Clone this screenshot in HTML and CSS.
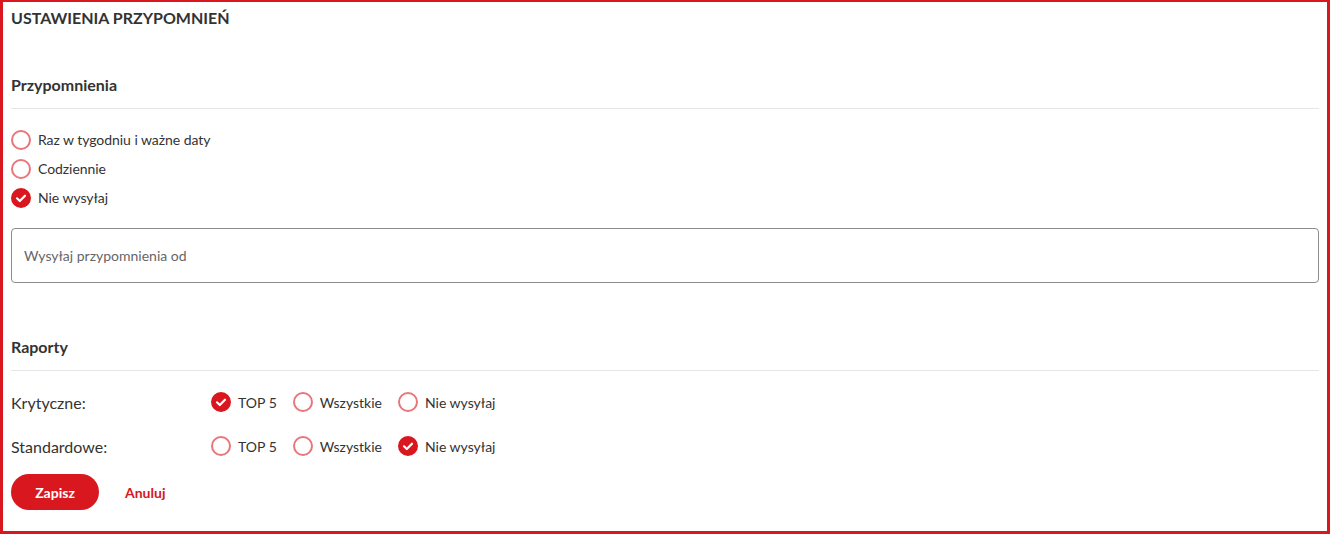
FILE: index.html
```html
<!DOCTYPE html>
<html lang="pl">
<head>
<meta charset="utf-8">
<link rel="stylesheet" href="styles.css">
</head>
<body>
<div class="panel">
  <h1 class="title">USTAWIENIA PRZYPOMNIEŃ</h1>

  <h2 class="section-title first">Przypomnienia</h2>
  <div class="divider"></div>
  <div class="options">
    <label class="option"><span class="radio"></span><span>Raz w tygodniu i ważne daty</span></label>
    <label class="option"><span class="radio"></span><span>Codziennie</span></label>
    <label class="option"><span class="radio checked"><svg viewBox="0 0 20 20"><path d="M6 10.3l2.8 2.7 5.2-5.3"/></svg></span><span>Nie wysyłaj</span></label>
  </div>
  <div class="input">Wysyłaj przypomnienia od</div>

  <h2 class="section-title second">Raporty</h2>
  <div class="divider"></div>
  <div class="report-rows">
    <div class="report-row">
      <span class="report-label">Krytyczne:</span>
      <div class="report-options">
        <label class="option"><span class="radio checked"><svg viewBox="0 0 20 20"><path d="M6 10.3l2.8 2.7 5.2-5.3"/></svg></span><span>TOP 5</span></label>
        <label class="option"><span class="radio"></span><span>Wszystkie</span></label>
        <label class="option"><span class="radio"></span><span>Nie wysyłaj</span></label>
      </div>
    </div>
    <div class="report-row">
      <span class="report-label">Standardowe:</span>
      <div class="report-options">
        <label class="option"><span class="radio"></span><span>TOP 5</span></label>
        <label class="option"><span class="radio"></span><span>Wszystkie</span></label>
        <label class="option"><span class="radio checked"><svg viewBox="0 0 20 20"><path d="M6 10.3l2.8 2.7 5.2-5.3"/></svg></span><span>Nie wysyłaj</span></label>
      </div>
    </div>
  </div>
  <div class="actions">
    <button class="btn-primary">Zapisz</button>
    <button class="btn-link">Anuluj</button>
  </div>
</div>
</body>
</html>
```
FILE: styles.css
```css
html, body {
  margin: 0;
  padding: 0;
  background: #fff;
}
body {
  font-family: Lato, "Liberation Sans", sans-serif;
  color: #333;
}
.panel {
  box-sizing: border-box;
  width: 1330px;
  height: 534px;
  border: 3px solid #d8171f;
  border-top-width: 2px;
  padding: 6px 8px 0 8px;
}
.title {
  margin: 0;
  font-size: 16px;
  font-weight: 700;
  line-height: 20px;
  color: #333;
}
.section-title {
  margin: 0;
  font-size: 16px;
  font-weight: 700;
  line-height: 20px;
  color: #333;
}
.section-title.first { margin-top: 47px; }
.section-title.second { margin-top: 54px; }
.divider {
  height: 1px;
  background: #e6e6e6;
  margin-top: 13px;
}
.options {
  margin-top: 16px;
  display: flex;
  flex-direction: column;
}
.option {
  display: flex;
  align-items: center;
  gap: 7px;
  height: 29px;
  font-size: 14px;
  color: #333;
}
.options .option span:last-child {
  letter-spacing: -0.05px;
}
.radio {
  box-sizing: border-box;
  width: 20px;
  height: 20px;
  border-radius: 50%;
  border: 2px solid #e8767b;
  flex: none;
  display: flex;
}
.radio.checked {
  background: #d8171f;
  border-color: #d8171f;
}
.radio svg {
  width: 20px;
  height: 20px;
  margin: -2px;
  fill: none;
  stroke: #fff;
  stroke-width: 2.2;
  stroke-linecap: round;
  stroke-linejoin: round;
}
.input {
  box-sizing: border-box;
  margin-top: 16px;
  height: 55px;
  border: 1px solid #8c8c8c;
  border-radius: 4px;
  padding: 0 12px;
  display: flex;
  align-items: center;
  font-size: 14px;
  color: #666;
}
.report-rows {
  margin-top: 9px;
}
.report-row {
  display: flex;
  align-items: center;
  height: 44px;
}
.report-label {
  width: 200px;
  font-size: 16px;
  color: #333;
}
.report-options {
  display: flex;
  gap: 16px;
}
.actions {
  margin-top: 6px;
  display: flex;
  align-items: center;
}
.btn-primary {
  width: 88px;
  height: 36px;
  border: none;
  border-radius: 18px;
  background: #d8171f;
  color: #fff;
  font-family: Lato, "Liberation Sans", sans-serif;
  font-weight: 700;
  font-size: 14px;
  padding: 0;
}
.btn-link {
  margin-left: 26px;
  border: none;
  background: none;
  padding: 0;
  color: #d8171f;
  font-family: Lato, "Liberation Sans", sans-serif;
  font-weight: 700;
  font-size: 14px;
}
```
